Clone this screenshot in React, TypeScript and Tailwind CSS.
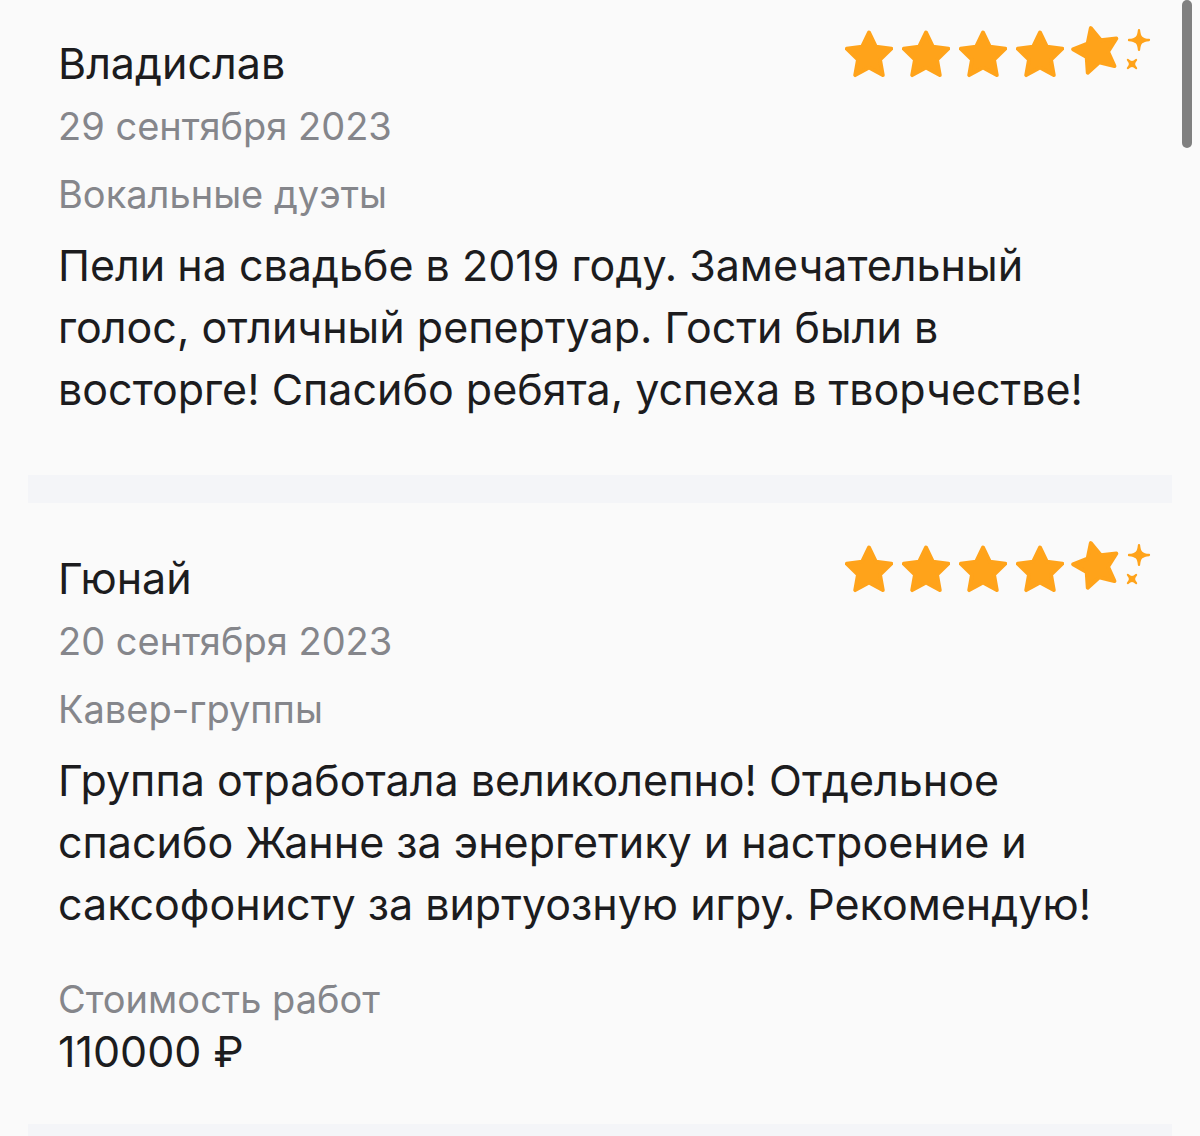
import React from "react";

interface Review {
  author: string;
  date: string;
  category: string;
  text: string[];
  price?: string;
}

const reviews: Review[] = [
  {
    author: "Владислав",
    date: "29 сентября 2023",
    category: "Вокальные дуэты",
    text: [
      "Пели на свадьбе в 2019 году. Замечательный",
      "голос, отличный репертуар. Гости были в",
      "восторге! Спасибо ребята, успеха в творчестве!",
    ],
  },
  {
    author: "Гюнай",
    date: "20 сентября 2023",
    category: "Кавер-группы",
    text: [
      "Группа отработала великолепно! Отдельное",
      "спасибо Жанне за энергетику и настроение и",
      "саксофонисту за виртуозную игру. Рекомендую!",
    ],
    price: "110000 ₽",
  },
];

const STAR = "M12 2.6l2.85 5.95 6.45.85-4.7 4.55 1.15 6.45L12 17.3l-5.75 3.1 1.15-6.45-4.7-4.55 6.45-.85z";
const SPARK = "M12 1.5C12.6 9 15 11.4 22.5 12 15 12.6 12.6 15 12 22.5 11.4 15 9 12.6 1.5 12 9 11.4 11.4 9 12 1.5z";
const ORANGE = "#ffa31a";

const Star = () => (
  <svg viewBox="2 1.6 20 20" className="w-[48px] h-[48px] -mt-[2px]">
    <path d={STAR} fill={ORANGE} stroke={ORANGE} strokeWidth={1.6} strokeLinejoin="round" />
  </svg>
);

// четыре полные звезды и последняя с «искрами»
const Rating = () => (
  <div className="flex items-start">
    <div className="flex items-start gap-[9px]">
      <Star />
      <Star />
      <Star />
      <Star />
    </div>
    <svg viewBox="0 0 84 56" className="ml-[4px] -mt-[10px] w-[84px] h-[56px]">
      <g transform="translate(28 27) rotate(-14) scale(2.4) translate(-12 -11.6)">
        <path d={STAR} fill={ORANGE} stroke={ORANGE} strokeWidth={1.6} strokeLinejoin="round" />
      </g>
      <g transform="translate(71 18) scale(0.95) translate(-12 -12)">
        <path d={SPARK} fill={ORANGE} stroke={ORANGE} strokeWidth={2.4} strokeLinejoin="round" />
      </g>
      <g transform="translate(64 42) rotate(45) scale(0.57) translate(-12 -12)">
        <path d={SPARK} fill={ORANGE} stroke={ORANGE} strokeWidth={3.4} strokeLinejoin="round" />
      </g>
    </svg>
  </div>
);

const ReviewCard = ({ review, top, bottom }: { review: Review; top: string; bottom: string }) => (
  <div className={`pl-[58px] pr-[48px] ${top} ${bottom}`}>
    <div className="flex items-start justify-between">
      <div className="text-[#1c1c1e] text-[43px] leading-[62px]">{review.author}</div>
      <Rating />
    </div>
    <div className="mt-[1px] text-[#85868b] text-[38px] leading-[62px]">{review.date}</div>
    <div className="mt-[6px] text-[#85868b] text-[38px] leading-[62px]">{review.category}</div>
    <div className="mt-[9px] text-[#1c1c1e] text-[43px] leading-[62px]">
      {review.text.map((line) => (
        <div key={line} className="whitespace-nowrap">{line}</div>
      ))}
    </div>
    {review.price && (
      <div className="mt-[38px]">
        <div className="text-[#85868b] text-[38px] leading-[52px]">Стоимость работ</div>
        <div className="text-[#1c1c1e] text-[43px] leading-[52px]">{review.price}</div>
      </div>
    )}
  </div>
);

export default function App() {
  return (
    <div
      className="relative h-[1136px] overflow-hidden bg-[#fafafa]"
      style={{ fontFamily: "Inter, 'Noto Sans', sans-serif" }}
    >
      <ReviewCard review={reviews[0]} top="pt-[32px]" bottom="pb-[55px]" />
      <div className="mx-[28px] h-[28px] bg-[#f4f5f8]" />
      <ReviewCard review={reviews[1]} top="pt-[44px]" bottom="pb-[47px]" />
      <div className="mx-[28px] h-[28px] bg-[#f4f5f8]" />

      {/* полоса прокрутки */}
      <div className="absolute right-[8px] top-0 w-[10px] h-[148px] rounded-full bg-[#808080]" />
    </div>
  );
}
